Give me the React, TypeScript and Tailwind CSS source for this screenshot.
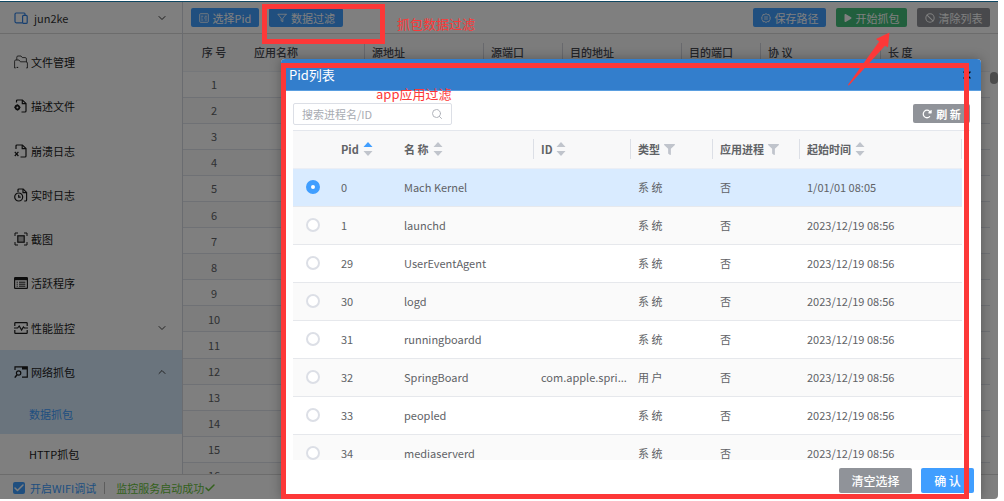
import { useState } from 'react';
import {
  LuBan,
  LuCheck,
  LuChevronDown,
  LuChevronUp,
  LuFilter,
  LuSearch,
  LuX,
} from 'react-icons/lu';
import { FaFilter, FaPlay } from 'react-icons/fa';
import { FaRotateRight } from 'react-icons/fa6';

const menus = [
  { icon: 'folder', label: '文件管理' },
  { icon: 'profile', label: '描述文件' },
  { icon: 'crash', label: '崩溃日志' },
  { icon: 'clock', label: '实时日志' },
  { icon: 'shot', label: '截图' },
  { icon: 'list', label: '活跃程序' },
  { icon: 'monitor', label: '性能监控', arrow: 'down' },
  { icon: 'network', label: '网络抓包', arrow: 'up' },
];

const packetColumns = [
  { label: '序 号', width: 'w-[62px]' },
  { label: '应用名称', width: 'w-[119px]' },
  { label: '源地址', width: 'w-[119px]', line: true },
  { label: '源端口', width: 'w-[79px]', line: true },
  { label: '目的地址', width: 'w-[119px]', line: true },
  { label: '目的端口', width: 'w-[79px]', line: true },
  { label: '协 议', width: 'w-[120px]', line: true },
  { label: '长 度', width: '', line: true },
];

const pidColumns = [
  { label: 'Pid', width: 'w-[63px]', tool: 'asc' },
  { label: '名 称', width: 'w-[137px]', tool: 'sort' },
  { label: 'ID', width: 'w-[97px]', tool: 'sort', line: true },
  { label: '类型', width: 'w-[82px]', tool: 'filter', line: true },
  { label: '应用进程', width: 'w-[87px]', tool: 'filter', line: true },
  { label: '起始时间', width: '', tool: 'sort', line: true, last: true },
];

const processes = [
  { pid: 0, name: 'Mach Kernel', id: '', type: '系 统', time: '1/01/01 08:05' },
  { pid: 1, name: 'launchd', id: '', type: '系 统', time: '2023/12/19 08:56' },
  { pid: 29, name: 'UserEventAgent', id: '', type: '系 统', time: '2023/12/19 08:56' },
  { pid: 30, name: 'logd', id: '', type: '系 统', time: '2023/12/19 08:56' },
  { pid: 31, name: 'runningboardd', id: '', type: '系 统', time: '2023/12/19 08:56' },
  { pid: 32, name: 'SpringBoard', id: 'com.apple.spri...', type: '用 户', time: '2023/12/19 08:56' },
  { pid: 33, name: 'peopled', id: '', type: '系 统', time: '2023/12/19 08:56' },
  { pid: 34, name: 'mediaserverd', id: '', type: '系 统', time: '2023/12/19 08:56' },
];

function MenuIcon({ name, size = 'size-3.5' }: { name: string; size?: string }) {
  return (
    <svg
      viewBox="0 0 14 14"
      className={`${size} shrink-0`}
      fill="none"
      stroke="currentColor"
      strokeWidth="1.2"
    >
      {name === 'folder' && (
        <>
          <path d="M2.8 5V2.2Q2.8 1 4 1h3l1.3 1.6h3Q12.4 2.6 12.4 4v3" strokeWidth="0.8" />
          <path d="M.6 13V6.2Q.6 5 1.8 5H5l1.4 1.8h5.4Q13.4 6.8 13.4 8v5" strokeWidth="0.8" />
          <path d="M2.6 12.4h1.6M.6 12.9h1M12.4 12.9h1" strokeWidth="1" />
        </>
      )}
      {name === 'profile' && (
        <>
          <path d="M2.5 3.5V2q0-1 1-1h4.9L12 4.4V12q0 1-1 1H7.5" />
          <path d="M8.3 1v3.6H12" />
          <circle cx="3.4" cy="8.4" r="1.9" strokeWidth="1.8" />
          <path d="M3.4 5.4v1M3.4 10.4v1.2M.4 8.4h1M5.4 8.4h1" />
        </>
      )}
      {name === 'crash' && (
        <>
          <path d="M2 5V2q0-1 1-1h5.4L12 4.4V12q0 1-1 1H6.5" />
          <path d="M8.2 1v3.6H12" />
          <path d="M.8 7.8l3.6 4.2M4.4 7.8L.8 12" />
        </>
      )}
      {name === 'clock' && (
        <>
          <path d="M4 4V2q0-1 1-1h4.2L12.6 4.4V12q0 1-1 1h-1.4" />
          <path d="M9 1v3.6h3.6" />
          <circle cx="4.7" cy="9" r="4" />
          <path d="M4.7 6.8V9.2h2" />
        </>
      )}
      {name === 'shot' && (
        <>
          <path d="M1 4V1h3M10 1h3v3M13 10v3h-3M4 13H1v-3" strokeWidth="1" />
          <rect x="3.8" y="3.8" width="6.4" height="6.4" fill="#bbb" />
        </>
      )}
      {name === 'list' && (
        <>
          <rect x=".6" y="1.6" width="12.8" height="10.8" rx=".6" />
          <path d="M1 3h12" strokeWidth="2.4" />
          <path d="M2.6 6.2h1.2M5 6.2h6.4M2.6 8.2h1.2M5 8.2h6.4M2.6 10.2h1.2M5 10.2h6.4" strokeWidth="1" />
        </>
      )}
      {name === 'monitor' && (
        <>
          <path d="M.8 5V2.2q0-.6.6-.6h11.2q.6 0 .6.6V5M13.2 9v2.8q0 .6-.6.6H1.4q-.6 0-.6-.6V9" />
          <path d="M0 7h3.6l1.6-2 2.4 4L9.4 6l1 1H14" />
        </>
      )}
      {name === 'network' && (
        <>
          <path d="M1 5V1.8h12.3v10.4H8" />
          <path d="M8 3.2h5" strokeWidth="2.6" />
          <circle cx="4.6" cy="8" r="2.2" />
          <path d="M3 9.8L.8 12.6" strokeWidth="1.5" />
        </>
      )}
      {name === 'device' && (
        <>
          <path d="M8 11.8H2.2Q1 11.8 1 10.6V3.2Q1 2 2.2 2h8Q11 2 11 3v1" />
          <rect x="8.6" y="4.4" width="4.6" height="8" rx="1" />
        </>
      )}
      {name === 'pid' && (
        <>
          <rect x="1" y="1" width="12" height="12" rx="1" />
          <path d="M3 4.5h3M8 4.5h3M3 7h2M7 7h4M3 9.8h3M8 9.8h3" />
        </>
      )}
      {name === 'path' && (
        <>
          <path d="M7 .8l1.8 1.4 2.3-.2.6 2.3 1.5 1.2-.8 1.6.8 1.6-1.5 1.2-.6 2.3-2.3-.2L7 13.3l-1.8-1.3-2.3.2-.6-2.3L.8 8.7l.8-1.6-.8-1.6 1.5-1.2L2.9 2l2.3.2z" />
          <path d="M4.4 5.6h5.2M4.4 8.4h5.2" />
        </>
      )}
    </svg>
  );
}

function SortIcon({ asc }: { asc?: boolean }) {
  return (
    <svg viewBox="0 0 10 14" className="h-3.5 w-2.5">
      <path d="M5 0L9.5 5H.5z" fill={asc ? '#409eff' : '#c0c4cc'} />
      <path d="M5 14L9.5 9H.5z" fill="#c0c4cc" />
    </svg>
  );
}

function Toolbar() {
  return (
    <div className="flex h-8 shrink-0 items-center border-b border-[#d8d8d8] px-2 text-white">
      <button type="button" className="mr-2.5 flex h-[19px] w-[68px] items-center justify-center gap-1 rounded-xs bg-[#409eff]">
        <MenuIcon name="pid" size="size-2.5" />
        选择Pid
      </button>
      <button type="button" className="flex h-[19px] w-[74px] items-center justify-center gap-1 rounded-xs bg-[#409eff]">
        <LuFilter className="size-2.5" />
        数据过滤
      </button>
      <div className="ml-auto flex gap-2.5">
        <button type="button" className="flex h-[19px] w-[73px] items-center justify-center gap-1 rounded-xs bg-[#409eff]">
          <MenuIcon name="path" size="size-2.5" />
          保存路径
        </button>
        <button type="button" className="flex h-[19px] w-[71px] items-center justify-center gap-1 rounded-xs bg-[#42be7b]">
          <FaPlay className="size-2" />
          开始抓包
        </button>
        <button type="button" className="flex h-[19px] w-[73px] items-center justify-center gap-1 rounded-xs bg-[#909399]">
          <LuBan className="size-2.5" strokeWidth={2.5} />
          清除列表
        </button>
      </div>
    </div>
  );
}

function Sidebar() {
  return (
    <aside className="flex w-[183px] shrink-0 flex-col border-r border-[#d5d8e0] text-[#1a1a1a]">
      <button type="button" className="flex h-8 shrink-0 items-center border-b border-[#d8d8d8] pr-3.5 pl-3.5 text-[#333]">
        <span className="flex text-[#2f7fe0]"><MenuIcon name="device" /></span>
        <span className="ml-1.5">jun2ke</span>
        <LuChevronDown className="ml-auto size-3" />
      </button>
      <nav className="flex flex-1 flex-col pt-1.5">
        {menus.map((menu) => (
          <a
            key={menu.label}
            href="#"
            className={
              menu.arrow === 'up'
                ? 'flex flex-1 items-center gap-[3px] bg-[#d4e8fb] px-3.5'
                : 'flex flex-1 items-center gap-[3px] px-3.5'
            }
          >
            <MenuIcon name={menu.icon} />
            <span>{menu.label}</span>
            {menu.arrow === 'down' && <LuChevronDown className="ml-auto size-3 text-[#444]" />}
            {menu.arrow === 'up' && <LuChevronUp className="ml-auto size-3 text-[#444]" />}
          </a>
        ))}
        <a href="#" className="flex h-10 items-center bg-[#d4e8fb] pl-[29px] text-[#409eff]">
          数据抓包
        </a>
        <a href="#" className="flex h-10 items-center pl-[29px]">
          HTTP抓包
        </a>
      </nav>
    </aside>
  );
}

function PacketTable() {
  return (
    <div className="flex flex-1 overflow-hidden">
      <div className="flex-1 overflow-hidden">
        <table className="h-[455px] w-full table-fixed border-collapse">
          <thead>
            <tr className="h-[37px] border-b border-[#ebeef5] bg-[#f8f8f9]">
              {packetColumns.map((col, i) => (
                <th key={col.label} className={`${col.width} p-0 text-left font-medium text-[#484b52]`}>
                  <div
                    className={
                      i === 0
                        ? 'text-center'
                        : col.line
                          ? 'border-l border-[#d0d3da] py-px pl-[7px]'
                          : 'pl-[9px]'
                    }
                  >
                    {col.label}
                  </div>
                </th>
              ))}
            </tr>
          </thead>
          <tbody>
            {Array.from({ length: 16 }, (_, i) => (
              <tr key={i} className="border-b border-[#dfe2ea] text-[#606266] even:bg-[#fafafa]">
                <td className="p-0 text-center">{i + 1}</td>
                <td colSpan={7} className="p-0" />
              </tr>
            ))}
          </tbody>
        </table>
      </div>
      <div className="w-2 pt-[38px]">
        <div className="h-3 rounded-full bg-[#999]" />
      </div>
    </div>
  );
}

function PidDialog() {
  const [selected, setSelected] = useState(0);

  return (
    <section
      role="dialog"
      aria-label="Pid列表"
      className="absolute top-[58px] right-[17px] bottom-0 left-[281px] flex flex-col overflow-hidden rounded-t-sm bg-white shadow-[0_0_12px_rgba(0,0,0,0.3)]"
    >
      <header className="flex h-8 shrink-0 items-center justify-between border-b border-[#5a9ee0] bg-[#337ecc] px-2">
        <h2 className="text-[13px] text-white">Pid列表</h2>
        <button type="button" aria-label="关闭">
          <LuX className="size-3" strokeWidth={2.5} />
        </button>
      </header>

      <div className="flex flex-1 flex-col overflow-hidden pr-[11px] pl-3">
        <div className="flex h-[39px] shrink-0 items-center justify-between pt-1.5">
          <label className="flex h-[22px] w-[159px] items-center rounded-xs border border-[#dcdfe6] px-2">
            <input
              type="text"
              aria-label="搜索进程名/ID"
              placeholder="搜索进程名/ID"
              className="w-full outline-none placeholder:text-[#a8abb2]"
            />
            <LuSearch className="size-3 shrink-0 text-[#b0b3ba]" />
          </label>
          <button type="button" className="flex h-[19px] w-[57px] items-center justify-center gap-1 rounded-xs bg-[#909399] font-bold text-white">
            <FaRotateRight className="size-2.5" />
            刷 新
          </button>
        </div>

        <div className="flex-1 overflow-hidden border-t border-[#e4e7ed] bg-[#f8f8f9]">
          <div className="h-full bg-white pr-2">
            <table className="w-full table-fixed border-collapse text-[#606266]">
              <thead>
                <tr className="h-[37px] border-b border-[#ebeef5] bg-[#f8f8f9]">
                  <th className="w-10 p-0" />
                  {pidColumns.map((col) => (
                    <th key={col.label} className={`${col.width} p-0 text-left font-bold`}>
                      <div
                        className={`flex h-5 items-center gap-1 border-[#dcdfe6] ${
                          col.line ? 'border-l pl-[7px]' : 'pl-2'
                        } ${col.last ? 'border-r' : ''}`}
                      >
                        {col.label}
                        {col.tool === 'filter' ? (
                          <FaFilter className="size-[11px] text-[#c0c4cc]" />
                        ) : (
                          <SortIcon asc={col.tool === 'asc'} />
                        )}
                      </div>
                    </th>
                  ))}
                </tr>
              </thead>
              <tbody>
                {processes.map((item) => (
                  <tr
                    key={item.pid}
                    className={
                      selected === item.pid
                        ? 'h-[38px] border-b border-[#e6e9ee] bg-[#d9ebff]'
                        : 'h-[38px] border-b border-[#e6e8ec] even:bg-[#fafafa]'
                    }
                  >
                    <td className="p-0">
                      <input
                        type="radio"
                        name="pid"
                        aria-label={item.name}
                        checked={selected === item.pid}
                        onChange={() => setSelected(item.pid)}
                        className="mx-auto block size-3.5 appearance-none rounded-full border-2 border-[#dcdfe6] bg-white checked:border-[5px] checked:border-[#409eff]"
                      />
                    </td>
                    <td className="p-0 pl-2">{item.pid}</td>
                    <td className="p-0 pl-2">{item.name}</td>
                    <td className="p-0 pl-2 whitespace-nowrap">{item.id}</td>
                    <td className="p-0 pl-2">{item.type}</td>
                    <td className="p-0 pl-2">否</td>
                    <td className="p-0 pl-2">{item.time}</td>
                  </tr>
                ))}
              </tbody>
            </table>
          </div>
        </div>
      </div>

      <footer className="flex h-[39px] shrink-0 items-start justify-end gap-[9px] pt-2 pr-[7px] text-xs font-medium text-white">
        <button type="button" className="h-[25px] w-[73px] rounded-xs bg-[#909399]">
          清空选择
        </button>
        <button type="button" className="h-[25px] w-[53px] rounded-xs bg-[#409eff]">
          确 认
        </button>
      </footer>
    </section>
  );
}

// red marks drawn over the window
function Marks() {
  return (
    <div className="pointer-events-none absolute inset-0 text-[13px] text-[#fd3838]">
      <div className="absolute top-[3px] left-[262px] h-10 w-[123px] border-[5px] border-[#fd3838]" />
      <p className="absolute top-[13px] left-[397px] leading-5">抓包数据过滤</p>
      <div className="absolute top-[62px] right-[29px] bottom-0 left-[281px] border-[5px] border-[#fd3838]" />
      <p className="absolute top-[83px] left-[376px] leading-5">app应用过滤</p>
      <svg viewBox="0 0 42 54" className="absolute top-[31px] right-[108px] h-[54px] w-[42px]">
        <path d="M41.5 .5L28 7l3.2 2.6L-.2 53l1 .6L37 13.8l3 1.4z" fill="#fd3838" />
      </svg>
    </div>
  );
}

function App() {
  return (
    <div className="h-screen bg-white pt-px pr-1.5 pb-0.5 font-['Noto_Sans_CJK_SC',sans-serif] text-[11px] leading-4">
      <div className="relative flex h-full flex-col overflow-hidden rounded-br-sm">
        <div className="h-px shrink-0 bg-[#1f8fc4]" />
        <div className="flex min-h-0 flex-1">
          <Sidebar />
          <main className="flex min-w-0 flex-1 flex-col">
            <Toolbar />
            <PacketTable />
          </main>
        </div>
        <div className="flex h-[25px] shrink-0 items-center border-t border-[#d8d8d8] pt-0.5 pl-[13px]">
          <label className="flex items-center gap-[5px] text-[#409eff]">
            <span className="relative flex">
              <input
                type="checkbox"
                defaultChecked
                className="size-3 appearance-none rounded-xs bg-[#409eff]"
              />
              <LuCheck className="absolute inset-0 size-3 text-white" strokeWidth={3} />
            </span>
            开启WIFI调试
          </label>
          <span className="mr-[11px] ml-2 h-3 border-l border-[#bbb]" />
          <span className="flex items-center text-[#67c23a]">
            监控服务启动成功
            <LuCheck className="size-3" strokeWidth={3} />
          </span>
        </div>
        <div className="absolute inset-0 bg-black/50" />
        <PidDialog />
        <Marks />
      </div>
    </div>
  );
}

export default App;
